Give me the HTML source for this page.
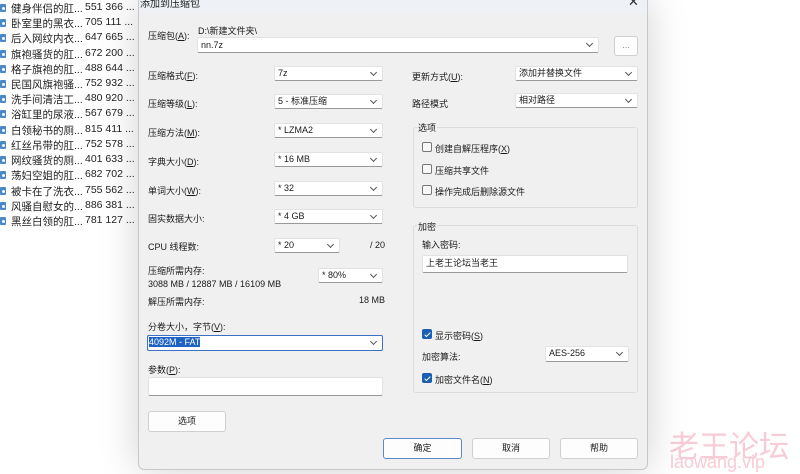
<!DOCTYPE html>
<html><head><meta charset="utf-8"><style>
*{margin:0;padding:0;box-sizing:border-box}
body{width:800px;height:474px;overflow:hidden;background:#fff;position:relative;font-family:"Liberation Sans","Noto Sans CJK SC",sans-serif;font-size:9px;color:#1a1a1a}
.a{position:absolute;white-space:nowrap}
.row{position:absolute;left:0;width:136px;height:15px;font-size:10.5px;color:#222;white-space:nowrap}
.row i{position:absolute;left:0;top:4px;width:6px;height:8px;background:#4a88c8;border-radius:1px}
.row i:after{content:"";position:absolute;left:1.5px;top:2.5px;width:3px;height:3px;border-radius:50%;background:#fff}
.row .n{position:absolute;left:11px;top:1px}
.row .s{position:absolute;left:85px;top:1px}
#dlg{position:absolute;left:138px;top:-2px;width:510px;height:472px;background:#f0f0f0;border:1px solid #c8c8c8;border-radius:0 0 6px 6px;box-shadow:0 0 40px rgba(0,0,0,.18)}
.title{position:absolute;left:0;top:0;width:100%;height:14px;background:#eef2f6}
.sel,.inp{position:absolute;background:#fff;border:1px solid #e2e2e2;border-bottom:1px solid #999;border-radius:2px;font-size:9px;padding-left:3px;line-height:13px}
.sel:after{content:"";position:absolute;right:6px;top:3px;width:4px;height:4px;border-right:1px solid #555;border-bottom:1px solid #555;transform:rotate(45deg)}
.btn{position:absolute;background:#fdfdfd;border:1px solid #d0d0d0;border-radius:3px;text-align:center;font-size:9px;line-height:19px}
.grp{position:absolute;border:1px solid #dcdcdc;border-radius:3px}
.cb{position:absolute;width:10px;height:10px;border:1px solid #777;border-radius:2px;background:#f8f8f8}
.cb.on{background:#1a5fb4;border-color:#1a5fb4}
.cb.on:after{content:"";position:absolute;left:3px;top:1px;width:2px;height:5px;border-right:1px solid #fff;border-bottom:1px solid #fff;transform:rotate(45deg)}
</style></head><body>
<div class="row" style="top:0"><i></i><span class="n">健身伴侣的肛...</span><span class="s">551 366 ...</span></div>
<div class="row" style="top:15px"><i></i><span class="n">卧室里的黑衣...</span><span class="s">705 111 ...</span></div>
<div class="row" style="top:30px"><i></i><span class="n">后入网纹内衣...</span><span class="s">647 665 ...</span></div>
<div class="row" style="top:46px"><i></i><span class="n">旗袍骚货的肛...</span><span class="s">672 200 ...</span></div>
<div class="row" style="top:61px"><i></i><span class="n">格子旗袍的肛...</span><span class="s">488 644 ...</span></div>
<div class="row" style="top:76px"><i></i><span class="n">民国风旗袍骚...</span><span class="s">752 932 ...</span></div>
<div class="row" style="top:91px"><i></i><span class="n">洗手间清洁工...</span><span class="s">480 920 ...</span></div>
<div class="row" style="top:106px"><i></i><span class="n">浴缸里的尿液...</span><span class="s">567 679 ...</span></div>
<div class="row" style="top:122px"><i></i><span class="n">白领秘书的厕...</span><span class="s">815 411 ...</span></div>
<div class="row" style="top:137px"><i></i><span class="n">红丝吊带的肛...</span><span class="s">752 578 ...</span></div>
<div class="row" style="top:152px"><i></i><span class="n">网纹骚货的厕...</span><span class="s">401 633 ...</span></div>
<div class="row" style="top:167px"><i></i><span class="n">荡妇空姐的肛...</span><span class="s">682 702 ...</span></div>
<div class="row" style="top:183px"><i></i><span class="n">被卡在了洗衣...</span><span class="s">755 562 ...</span></div>
<div class="row" style="top:198px"><i></i><span class="n">风骚自慰女的...</span><span class="s">886 381 ...</span></div>
<div class="row" style="top:213px"><i></i><span class="n">黑丝白领的肛...</span><span class="s">781 127 ...</span></div>

<div class="a" style="left:669px;top:422px;font-size:30px;color:#f7ccd6">老王论坛</div>
<div class="a" style="left:670px;top:452px;font-size:18px;color:#f7ccd6">laowang.vip</div>

<div id="dlg"><div class="title"></div></div>
<div class="a" style="left:140px;top:-5px;font-size:10px">添加到压缩包</div>
<div class="a" style="left:628px;top:-6px;font-size:13px;color:#333">✕</div>

<div class="a" style="left:148px;top:29px">压缩包(<u>A</u>):</div>
<div class="a" style="left:198px;top:24px">D:\新建文件夹\</div>
<div class="sel" style="left:197px;top:37px;width:402px;height:16px;line-height:14px">nn.7z</div>
<div class="btn" style="left:614px;top:36px;width:24px;height:20px;line-height:16px;color:#888">...</div>

<div class="a" style="left:148px;top:69px">压缩格式(<u>F</u>):</div>
<div class="sel" style="left:274px;top:66px;width:109px;height:15px">7z</div>
<div class="a" style="left:148px;top:97px">压缩等级(<u>L</u>):</div>
<div class="sel" style="left:274px;top:94px;width:109px;height:15px">5 - 标准压缩</div>
<div class="a" style="left:148px;top:126px">压缩方法(<u>M</u>):</div>
<div class="sel" style="left:274px;top:123px;width:109px;height:15px">* LZMA2</div>
<div class="a" style="left:148px;top:155px">字典大小(<u>D</u>):</div>
<div class="sel" style="left:274px;top:152px;width:109px;height:15px">* 16 MB</div>
<div class="a" style="left:148px;top:184px">单词大小(<u>W</u>):</div>
<div class="sel" style="left:274px;top:181px;width:109px;height:15px">* 32</div>
<div class="a" style="left:148px;top:212px">固实数据大小:</div>
<div class="sel" style="left:274px;top:209px;width:109px;height:15px">* 4 GB</div>
<div class="a" style="left:148px;top:240px">CPU 线程数:</div>
<div class="sel" style="left:274px;top:238px;width:66px;height:15px">* 20</div>
<div class="a" style="left:370px;top:240px">/ 20</div>
<div class="a" style="left:148px;top:264px">压缩所需内存:</div>
<div class="a" style="left:148px;top:279px">3088 MB / 12887 MB / 16109 MB</div>
<div class="sel" style="left:318px;top:268px;width:65px;height:15px">* 80%</div>
<div class="a" style="left:148px;top:295px">解压所需内存:</div>
<div class="a" style="left:359px;top:295px">18 MB</div>
<div class="a" style="left:148px;top:320px">分卷大小，字节(<u>V</u>):</div>
<div class="sel" style="left:147px;top:335px;width:236px;height:16px;border:1px solid #3a6fc4;padding-left:1px"><span style="background:#1e63c4;color:#fff">4092M - FAT</span></div>
<div class="a" style="left:148px;top:363px">参数(<u>P</u>):</div>
<div class="inp" style="left:148px;top:377px;width:235px;height:19px"></div>
<div class="btn" style="left:148px;top:411px;width:78px;height:21px">选项</div>

<div class="a" style="left:412px;top:70px">更新方式(<u>U</u>):</div>
<div class="sel" style="left:515px;top:66px;width:123px;height:15px">添加并替换文件</div>
<div class="a" style="left:412px;top:97px">路径模式</div>
<div class="sel" style="left:515px;top:93px;width:123px;height:15px">相对路径</div>

<div class="grp" style="left:413px;top:127px;width:225px;height:81px"></div>
<div class="a" style="left:417px;top:121px;background:#f0f0f0;padding:0 1px">选项</div>
<div class="cb" style="left:422px;top:142px"></div><div class="a" style="left:435px;top:142px">创建自解压程序(<u>X</u>)</div>
<div class="cb" style="left:422px;top:164px"></div><div class="a" style="left:435px;top:164px">压缩共享文件</div>
<div class="cb" style="left:422px;top:185px"></div><div class="a" style="left:435px;top:185px">操作完成后删除源文件</div>

<div class="grp" style="left:413px;top:225px;width:225px;height:168px"></div>
<div class="a" style="left:417px;top:220px;background:#f0f0f0;padding:0 1px">加密</div>
<div class="a" style="left:422px;top:238px">输入密码:</div>
<div class="inp" style="left:422px;top:255px;width:206px;height:18px;line-height:15px">上老王论坛当老王</div>
<div class="cb on" style="left:422px;top:329px"></div><div class="a" style="left:435px;top:329px">显示密码(<u>S</u>)</div>
<div class="a" style="left:422px;top:350px">加密算法:</div>
<div class="sel" style="left:545px;top:346px;width:84px;height:16px">AES-256</div>
<div class="cb on" style="left:422px;top:373px"></div><div class="a" style="left:435px;top:373px">加密文件名(<u>N</u>)</div>

<div class="btn" style="left:383px;top:438px;width:79px;height:21px;border-color:#5a88c8">确定</div>
<div class="btn" style="left:472px;top:438px;width:78px;height:21px">取消</div>
<div class="btn" style="left:560px;top:438px;width:78px;height:21px">帮助</div>
</body></html>
